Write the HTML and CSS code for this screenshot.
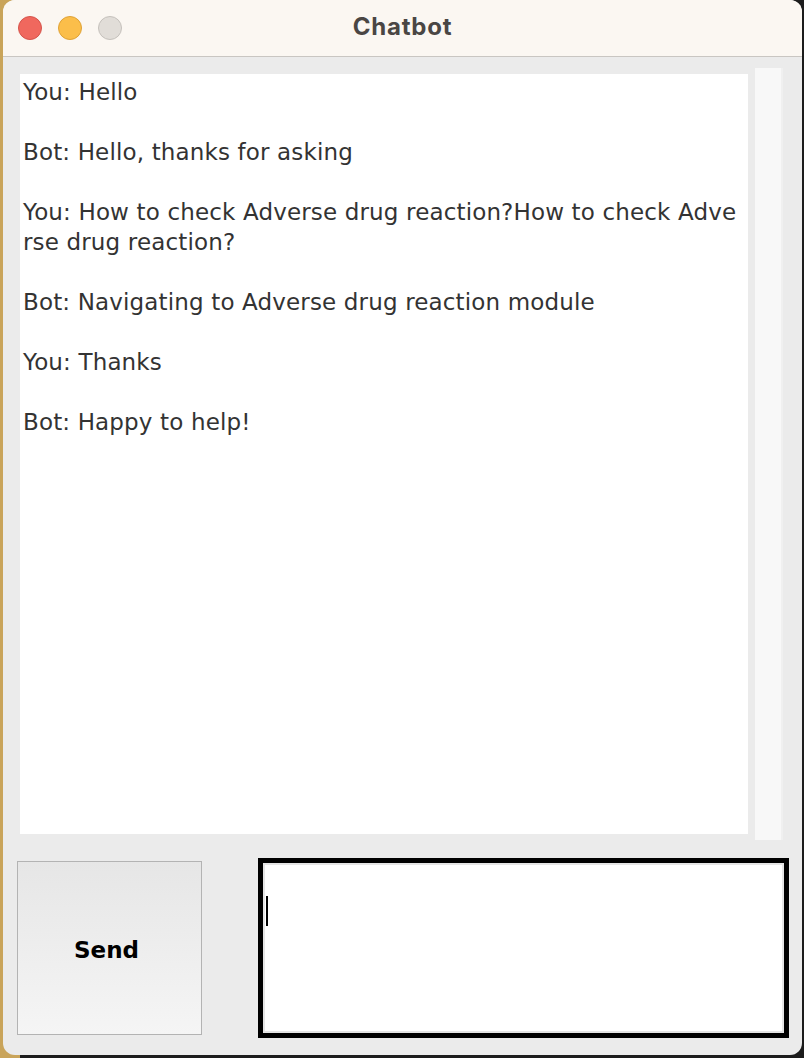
FILE: index.html
```html
<!DOCTYPE html>
<html>
<head>
<meta charset="utf-8">
<link rel="stylesheet" href="styles.css">
</head>
<body>
<div class="window">
  <div class="titlebar">
    <div class="lights">
      <span class="light red"></span>
      <span class="light yellow"></span>
      <span class="light gray"></span>
    </div>
    <div class="title">Chatbot</div>
  </div>
  <div class="content">
    <div class="pane">
      <div class="chat">You: Hello

Bot: Hello, thanks for asking

You: How to check Adverse drug reaction?How to check Adverse drug reaction?

Bot: Navigating to Adverse drug reaction module

You: Thanks

Bot: Happy to help!</div>
      <div class="scrollbar"></div>
    </div>
    <div class="bottom">
      <button class="send">Send</button>
      <div class="input"><span class="caret"></span></div>
    </div>
  </div>
</div>
</body>
</html>
```
FILE: styles.css
```css
html, body {
  margin: 0;
  padding: 0;
}
body {
  width: 804px;
  height: 1058px;
  background: linear-gradient(to right, #c9a45a 0, #c9a45a 20px, #1c1c1c 20px);
  overflow: hidden;
}
.window {
  margin-left: 3px;
  width: 799px;
  height: 1055px;
  background: #ebebeb;
  border-radius: 12px;
  overflow: hidden;
  display: flex;
  flex-direction: column;
}
.titlebar {
  height: 56px;
  flex: none;
  background: #fbf7f2;
  border-bottom: 1px solid #c9c6c2;
  position: relative;
  display: flex;
  align-items: center;
  justify-content: center;
}
.lights {
  position: absolute;
  left: 15px;
  top: 16px;
  display: flex;
  gap: 16px;
}
.light {
  width: 22px;
  height: 22px;
  border-radius: 50%;
  display: block;
}
.red { background: #f0685e; border: 1px solid #d5544b; }
.yellow { background: #fbbe4a; border: 1px solid #dfa236; }
.gray { background: #e1ddd8; border: 1px solid #c5c1bc; }
.title {
  font-family: Inter, "Liberation Sans", sans-serif;
  font-weight: 700;
  font-size: 24px;
  letter-spacing: 0.8px;
  color: #4a4644;
  margin-top: -3px;
}
.content {
  padding: 11px 0 0 11px;
  display: flex;
  flex-direction: column;
}
.pane {
  display: flex;
  width: 769px;
  height: 772px;
}
.chat {
  margin: 6px 7px 6px 6px;
  width: 719px;
  padding: 3px 6px 0 3px;
  background: #ffffff;
  font-family: "DejaVu Sans", Verdana, sans-serif;
  font-size: 23px;
  letter-spacing: 0.15px;
  line-height: 30px;
  color: #333333;
  white-space: pre-wrap;
  word-break: break-all;
}
.scrollbar {
  width: 26px;
  background: #f8f8f8;
  border-right: 2px solid #f0f0f0;
}
.bottom {
  margin-top: 18px;
  height: 180px;
  display: flex;
  align-items: stretch;
}
.send {
  margin: 3px 0 3px 3px;
  width: 185px;
  border: 1px solid #b3b3b3;
  background: linear-gradient(to bottom, #e6e6e6, #f5f5f5);
  font-family: "DejaVu Sans", Verdana, sans-serif;
  font-weight: 700;
  font-size: 23px;
  color: #000;
  padding: 4px 6px 0 0;
}
.input {
  margin-left: 56px;
  width: 521px;
  border: 5px solid #000;
  box-shadow: inset 0 0 0 2px #e4e4e4;
  background: #fff;
  position: relative;
}
.caret {
  position: absolute;
  left: 3px;
  top: 33px;
  width: 2px;
  height: 30px;
  background: #000;
}
```
